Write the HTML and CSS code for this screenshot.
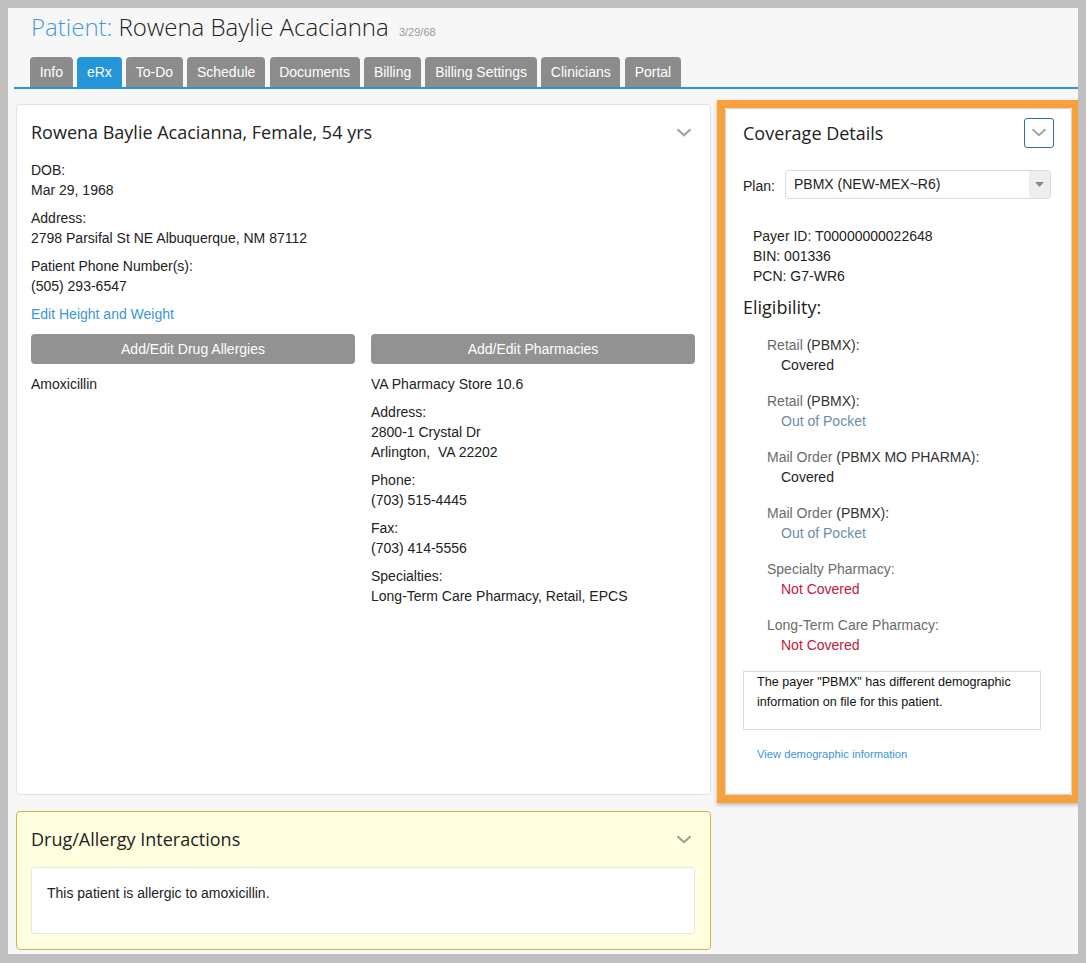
FILE: index.html
```html
<!DOCTYPE html>
<html lang="en">
<head>
<meta charset="utf-8">
<title>Patient: Rowena Baylie Acacianna</title>
<link rel="stylesheet" href="styles.css">
</head>
<body>
<div class="page">
  <header class="page-header">
    <h1 class="patient-title"><span class="title-label">Patient:</span> Rowena Baylie Acacianna <small class="title-dob">3/29/68</small></h1>
    <nav class="tabs">
      <a class="tab">Info</a>
      <a class="tab tab-active">eRx</a>
      <a class="tab">To-Do</a>
      <a class="tab">Schedule</a>
      <a class="tab">Documents</a>
      <a class="tab">Billing</a>
      <a class="tab">Billing Settings</a>
      <a class="tab">Clinicians</a>
      <a class="tab">Portal</a>
    </nav>
  </header>

  <main class="layout">
    <section class="card patient-card">
      <div class="card-header">
        <h2 class="card-title">Rowena Baylie Acacianna, Female, 54 yrs</h2>
        <svg class="chevron" width="16" height="9" viewBox="0 0 16 9"><path d="M1.5 1.2 L8 7.2 L14.5 1.2" fill="none" stroke="#a3a3a3" stroke-width="2.2"/></svg>
      </div>
      <div class="field"><div>DOB:</div><div>Mar 29, 1968</div></div>
      <div class="field"><div>Address:</div><div>2798 Parsifal St NE Albuquerque, NM 87112</div></div>
      <div class="field"><div>Patient Phone Number(s):</div><div>(505) 293-6547</div></div>
      <a class="link edit-link">Edit Height and Weight</a>
      <div class="two-col">
        <div class="col">
          <button class="btn">Add/Edit Drug Allergies</button>
          <div class="col-body">
            <div class="field">Amoxicillin</div>
          </div>
        </div>
        <div class="col">
          <button class="btn">Add/Edit Pharmacies</button>
          <div class="col-body">
            <div class="field">VA Pharmacy Store 10.6</div>
            <div class="field"><div>Address:</div><div>2800-1 Crystal Dr</div><div>Arlington,&nbsp; VA 22202</div></div>
            <div class="field"><div>Phone:</div><div>(703) 515-4445</div></div>
            <div class="field"><div>Fax:</div><div>(703) 414-5556</div></div>
            <div class="field"><div>Specialties:</div><div>Long-Term Care Pharmacy, Retail, EPCS</div></div>
          </div>
        </div>
      </div>
    </section>

    <div class="highlight-frame">
      <aside class="card coverage-card">
        <div class="coverage-header">
          <h2 class="card-title">Coverage Details</h2>
          <button class="collapse-btn"><svg width="16" height="9" viewBox="0 0 16 9"><path d="M1.5 1.2 L8 7.2 L14.5 1.2" fill="none" stroke="#a3a3a3" stroke-width="2"/></svg></button>
        </div>
        <div class="plan-row">
          <label class="plan-label">Plan:</label>
          <div class="select">
            <span class="select-value">PBMX (NEW-MEX~R6)</span>
            <span class="select-arrow"><svg width="9" height="5" viewBox="0 0 9 5"><path d="M0 0 H9 L4.5 5 Z" fill="#8a8a8a"/></svg></span>
          </div>
        </div>
        <div class="payer">
          <div>Payer ID: T00000000022648</div>
          <div>BIN: 001336</div>
          <div>PCN: G7-WR6</div>
        </div>
        <h3 class="elig-title">Eligibility:</h3>
        <div class="elig-list">
          <div class="elig"><div class="elig-label">Retail <span class="elig-name">(PBMX):</span></div><div class="elig-value covered">Covered</div></div>
          <div class="elig"><div class="elig-label">Retail <span class="elig-name">(PBMX):</span></div><div class="elig-value oop">Out of Pocket</div></div>
          <div class="elig"><div class="elig-label">Mail Order <span class="elig-name">(PBMX MO PHARMA):</span></div><div class="elig-value covered">Covered</div></div>
          <div class="elig"><div class="elig-label">Mail Order <span class="elig-name">(PBMX):</span></div><div class="elig-value oop">Out of Pocket</div></div>
          <div class="elig"><div class="elig-label">Specialty Pharmacy:</div><div class="elig-value not-covered">Not Covered</div></div>
          <div class="elig"><div class="elig-label">Long-Term Care Pharmacy:</div><div class="elig-value not-covered">Not Covered</div></div>
        </div>
        <div class="notice">The payer "PBMX" has different demographic information on file for this patient.</div>
        <a class="link demo-link">View demographic information</a>
      </aside>
    </div>

    <section class="card interactions-card">
      <div class="card-header">
        <h2 class="card-title">Drug/Allergy Interactions</h2>
        <svg class="chevron" width="16" height="9" viewBox="0 0 16 9"><path d="M1.5 1.2 L8 7.2 L14.5 1.2" fill="none" stroke="#a0a094" stroke-width="2.2"/></svg>
      </div>
      <div class="interaction-box">This patient is allergic to amoxicillin.</div>
    </section>
  </main>
</div>
</body>
</html>
```

FILE: styles.css
```css
html {
  background: #c0c0c0;
}

body {
  margin: 8px;
  height: 946px;
  background: #f7f7f7;
  font-family: "Liberation Sans", Arial, sans-serif;
  font-size: 14px;
  line-height: 20px;
  color: #222;
  overflow: hidden;
}

.page {
  padding-top: 4px;
}

.patient-title {
  margin: 0 0 15px 23px;
  height: 30px;
  font-family: "Open Sans", sans-serif;
  font-weight: 300;
  font-size: 24px;
  line-height: 30px;
  color: #222;
}

.title-label {
  color: #3f9be0;
}

.title-dob {
  font-family: "Liberation Sans", Arial, sans-serif;
  font-size: 11px;
  line-height: 0;
  color: #9a9a9a;
  margin-left: 4px;
}

.tabs {
  display: flex;
  gap: 4.5px;
  margin-left: 6px;
  padding-left: 16px;
  border-bottom: 2px solid #2b93d6;
}

.tab {
  display: block;
  height: 30px;
  line-height: 30px;
  padding: 0 9.7px;
  background: #8c8c8c;
  color: #fff;
  border-radius: 4px 4px 0 0;
}

.tab-active {
  background: #2596d8;
}

.layout {
  display: grid;
  grid-template-columns: 695px 363px;
  grid-template-rows: 691px auto;
  column-gap: 6px;
  row-gap: 16px;
  padding: 0 0 0 8px;
  margin-top: 15px;
}

.card {
  background: #fff;
  border: 1px solid #e2e2e2;
  border-radius: 4px;
  box-sizing: border-box;
}

.card-title {
  margin: 0;
  font-family: "Open Sans", sans-serif;
  font-weight: 400;
  font-size: 18px;
  line-height: 20px;
  color: #222;
}

.card-header {
  display: flex;
  justify-content: space-between;
  align-items: center;
  margin-bottom: 18px;
}

.chevron {
  margin-right: 3px;
}

.patient-card {
  grid-column: 1;
  grid-row: 1;
  padding: 17px 15px 15px 14px;
}

.field {
  margin-bottom: 8px;
}

.link {
  color: #3a96db;
  cursor: pointer;
}

.edit-link {
  display: block;
  margin-bottom: 10px;
}

.two-col {
  display: grid;
  grid-template-columns: 1fr 1fr;
  column-gap: 16px;
}

.btn {
  display: block;
  width: 100%;
  height: 30px;
  border: 0;
  border-radius: 4px;
  background: #929292;
  color: #fff;
  font-family: "Liberation Sans", Arial, sans-serif;
  font-size: 14px;
  padding: 0;
  margin-bottom: 10px;
}

.highlight-frame {
  grid-column: 2;
  grid-row: 1;
  margin: -4px 0 -8px;
  border: 8px solid #f9a03c;
  box-shadow: 0 2px 4px rgba(0, 0, 0, 0.25);
  display: flex;
}

.coverage-card {
  flex: 1;
  padding: 9px 17px 29px 17px;
  border-color: #d6d6d6;
  border-radius: 2px;
  box-shadow: inset 0 0 2px rgba(0, 0, 0, 0.12);
}

.coverage-header {
  display: flex;
  justify-content: space-between;
  align-items: center;
  height: 29px;
}

.collapse-btn {
  width: 30px;
  height: 30px;
  box-sizing: border-box;
  border: 1px solid #2f6e9e;
  border-radius: 3px;
  background: #fff;
  padding: 0;
  display: flex;
  align-items: center;
  justify-content: center;
}

.plan-row {
  display: flex;
  align-items: center;
  margin-top: 23px;
}

.plan-label {
  width: 42px;
  padding-top: 3px;
}

.select {
  flex: 1;
  height: 29px;
  box-sizing: border-box;
  margin-right: 3px;
  border: 1px solid #dcdcdc;
  border-radius: 3px;
  display: flex;
  align-items: stretch;
}

.select-value {
  flex: 1;
  padding-left: 8px;
  line-height: 27px;
}

.select-arrow {
  width: 21px;
  background: #eeeeee;
  display: flex;
  align-items: center;
  justify-content: center;
  border-radius: 0 2px 2px 0;
}

.payer {
  margin-top: 27px;
  padding-left: 10px;
}

.elig-title {
  margin: 11px 0 18px;
  font-family: "Open Sans", sans-serif;
  font-weight: 400;
  font-size: 18px;
  line-height: 20px;
  color: #222;
}

.elig-list {
  padding-left: 24px;
}

.elig {
  margin-bottom: 16px;
}

.elig-label {
  color: #6b6b6b;
}

.elig-name {
  color: #333;
}

.elig-value {
  padding-left: 14px;
}

.covered {
  color: #222;
}

.oop {
  color: #6c8cab;
}

.not-covered {
  color: #c4173a;
}

.notice {
  margin-right: 13px;
  border: 1px solid #cfdde6;
  padding: 0 13px 17px;
  font-size: 12.6px;
  line-height: 20px;
  color: #111;
}

.demo-link {
  display: block;
  margin-top: 14px;
  padding-left: 14px;
  font-size: 11.2px;
  line-height: 20px;
}

.interactions-card {
  grid-column: 1;
  grid-row: 2;
  height: 139px;
  padding: 17px 15px 15px 14px;
  background: #ffffdf;
  border-color: #d4b24e;
}

.interaction-box {
  background: #fff;
  border: 1px solid #e6e6e6;
  border-radius: 3px;
  padding: 15px 15px 30px;
  height: 67px;
  box-sizing: border-box;
}
```
